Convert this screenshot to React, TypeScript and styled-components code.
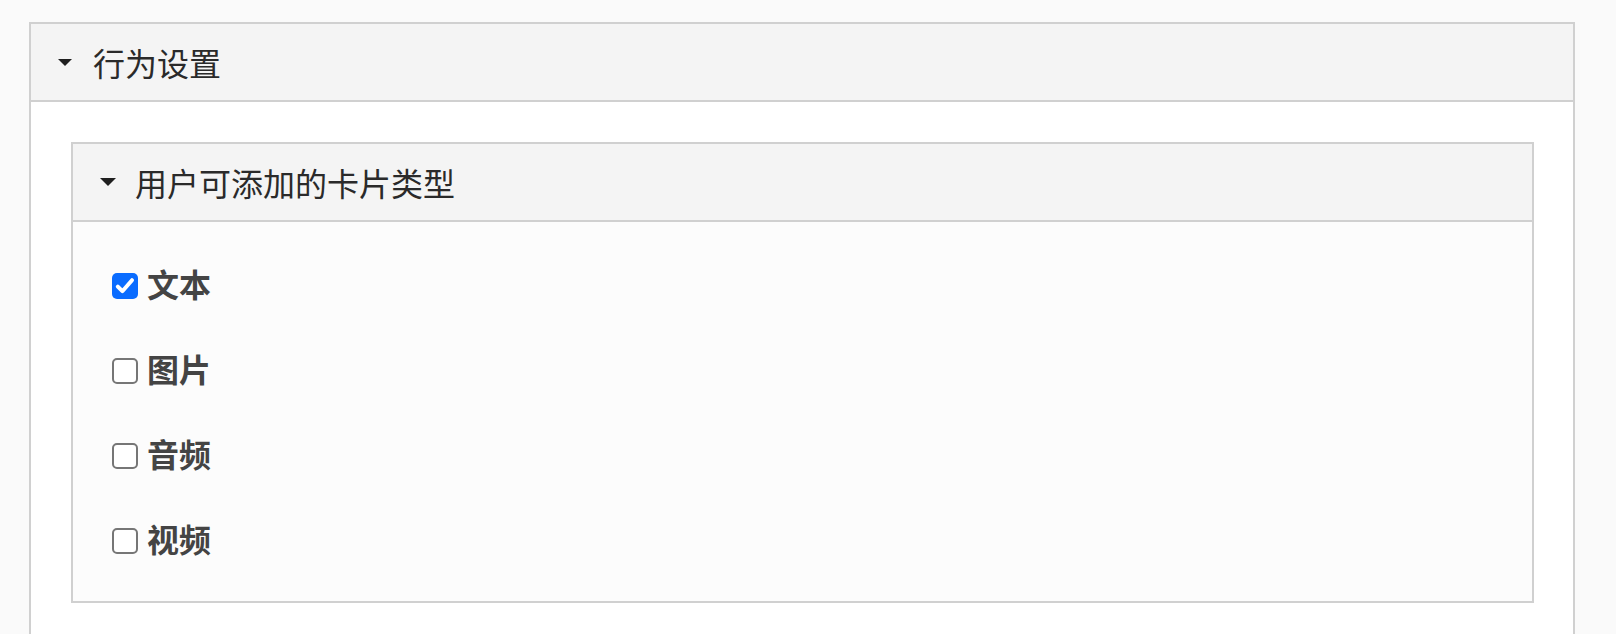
import styled, { createGlobalStyle } from 'styled-components';
import { useState } from 'react';

interface CardType {
    id: string,
    label: string,
    checked: boolean,
};

const initialTypes: CardType[] = [
    { id: 'text', label: '文本', checked: true },
    { id: 'image', label: '图片', checked: false },
    { id: 'audio', label: '音频', checked: false },
    { id: 'video', label: '视频', checked: false },
];

const GlobalStyle = createGlobalStyle`
body {
    margin: 0;
    background: #fafafa;
    font-family: "Noto Sans CJK SC", "Noto Sans", sans-serif;
}
`;

const Page = styled.div`
padding: 22px 41px 0 29px;
height: 634px;
box-sizing: border-box;
overflow: hidden;
`;

const Panel = styled.section<{ $inner?: boolean }>`
border: 2px solid #d0d0d0;
background: #fff;
min-height: ${(props) => (props.$inner ? 'auto' : '700px')};
`;

const PanelHeader = styled.div<{ $inner?: boolean }>`
height: 76px;
display: flex;
align-items: center;
gap: ${(props) => (props.$inner ? '19px' : '21px')};
padding-left: 27px;
background: #f4f4f4;
border-bottom: 2px solid #d0d0d0;
color: #2a2a2a;
font-size: 32px;
cursor: pointer;
user-select: none;
`;

const PanelBody = styled.div`
padding: 40px 39px 40px 40px;
`;

const CheckList = styled.div`
display: flex;
flex-direction: column;
gap: 40px;
padding: 41px 39px 38px 39px;
background: #fcfcfc;
`;

const Row = styled.label`
display: flex;
align-items: center;
gap: 9px;
height: 45px;
cursor: pointer;
`;

const Box = styled.input`
appearance: none;
margin: 0;
width: 26px;
height: 26px;
box-sizing: border-box;
border: 2px solid #767676;
border-radius: 5px;
background: #fff;
cursor: pointer;
&:checked {
    border: none;
    background: #0a6cff url("data:image/svg+xml,%3Csvg xmlns='http://www.w3.org/2000/svg' viewBox='0 0 26 26'%3E%3Cpath d='M5.8 13.6l4.6 4.6 9.6-11' fill='none' stroke='white' stroke-width='4' stroke-linecap='round' stroke-linejoin='round'/%3E%3C/svg%3E") center / 26px 26px no-repeat;
}
`;

const Label = styled.span`
font-size: 32px;
font-weight: 700;
color: #444;
line-height: 45px;
padding-bottom: 4px;
`;

function Caret({ w }: { w: number }) {
    return (
        <svg width={w} height={w / 2} viewBox="0 0 14 7">
            <path d="M0 0h14L7 7z" fill="#1f1f1f" />
        </svg>
    );
}

function App() {
    const [types, setTypes] = useState<CardType[]>(initialTypes);
    const toggle = (id: string) =>
        setTypes((prev) => prev.map((t) => (t.id === id ? { ...t, checked: !t.checked } : t)));

    return (
        <Page>
            <GlobalStyle />
            <Panel>
                <PanelHeader>
                    <Caret w={14} />
                    行为设置
                </PanelHeader>
                <PanelBody>
                    <Panel $inner>
                        <PanelHeader $inner>
                            <Caret w={16} />
                            用户可添加的卡片类型
                        </PanelHeader>
                        <CheckList>
                            {types.map((t) => (
                                <Row key={t.id}>
                                    <Box type="checkbox" checked={t.checked} onChange={() => toggle(t.id)} />
                                    <Label>{t.label}</Label>
                                </Row>
                            ))}
                        </CheckList>
                    </Panel>
                </PanelBody>
            </Panel>
        </Page>
    );
}
export default App;
